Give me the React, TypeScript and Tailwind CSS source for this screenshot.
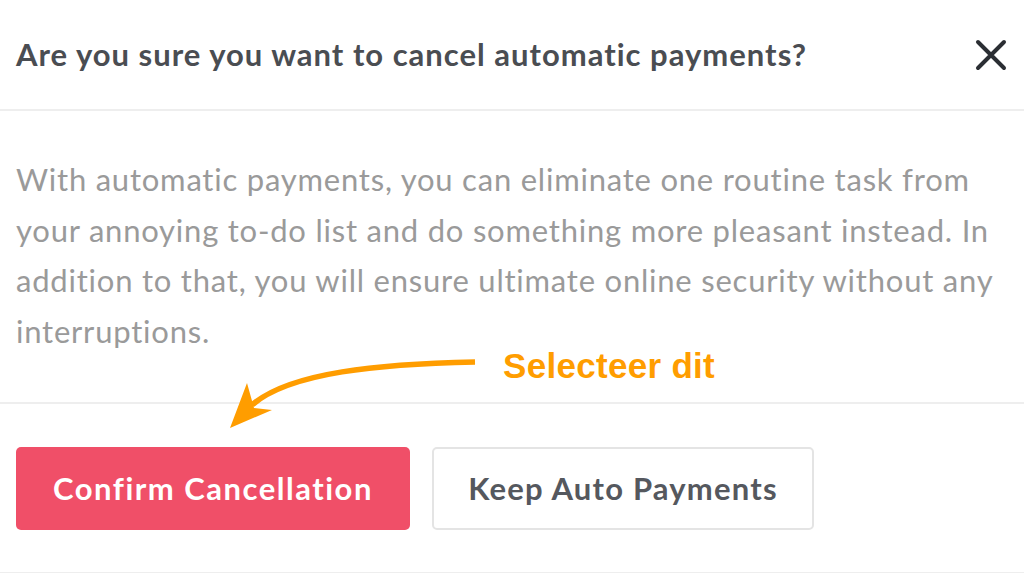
import React from "react";

const CloseIcon = () => (
  <svg width="34" height="34" viewBox="0 0 34 34" fill="none">
    <path d="M4 4L30 30M30 4L4 30" stroke="#2b2e33" strokeWidth="4" strokeLinecap="round" />
  </svg>
);

const Annotation = () => (
  <div className="absolute left-0 top-0 w-full h-full pointer-events-none">
    <svg className="absolute left-0 top-0" width="1024" height="578" viewBox="0 0 1024 578">
      <path d="M475 362 C 380 364, 290 372, 252 405" stroke="#ff9d00" strokeWidth="5.5" fill="none" />
      <path d="M247 383 L230 428 L272 410 L254 408 Z" fill="#ff9d00" />
    </svg>
    <span className="absolute left-[503px] top-[345px] text-[35px] leading-[42px] font-bold text-[#ff9d00] font-['Liberation_Sans',Arial,sans-serif] tracking-[0.3px]">
      Selecteer dit
    </span>
  </div>
);

export default function App() {
  return (
    <div className="relative w-[1024px] h-[578px] bg-white overflow-hidden font-['Lato','Noto_Sans',sans-serif]">
      <header className="flex items-center justify-between h-[111px] pl-4 pr-4 border-b-2 border-[#eeeeee]">
        <h2 className="text-[31px] font-bold text-[#4a4d52] tracking-[1px]">
          Are you sure you want to cancel automatic payments?
        </h2>
        <CloseIcon />
      </header>
      <main className="h-[293px] pl-4 pr-2 pt-[43px] border-b-2 border-[#eeeeee] box-border">
        <p className="text-[31px] leading-[50.5px] text-[#9a9a9a] tracking-[0.78px]">
          With automatic payments, you can eliminate one routine task from your annoying to-do list and do something more pleasant instead. In addition to that, you will ensure ultimate online security without any interruptions.
        </p>
      </main>
      <footer className="flex gap-[22px] pl-4 pt-[43px] pb-[42px] border-b border-[#eeeeee]">
        <button className="w-[394px] h-[83px] rounded-[5px] bg-[#f04f68] text-white text-[31px] font-bold tracking-[1.5px]">
          Confirm Cancellation
        </button>
        <button className="w-[382px] h-[83px] rounded-[5px] border-2 border-[#e4e4e4] bg-white text-[#55585e] text-[31px] font-bold tracking-[1.2px]">
          Keep Auto Payments
        </button>
      </footer>
      <Annotation />
    </div>
  );
}
